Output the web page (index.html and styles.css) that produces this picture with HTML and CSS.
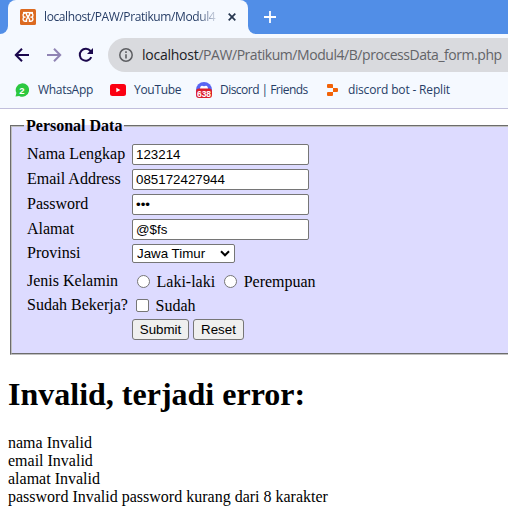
FILE: index.html
```html
<!DOCTYPE html>
<html lang="id">
<head>
<meta charset="utf-8">
<title>localhost/PAW/Pratikum/Modul4</title>
<link rel="stylesheet" href="styles.css">
</head>
<body>
<header class="browser">
  <div class="tabstrip">
    <div class="edge"><i class="curve-left"></i></div>
    <div class="tab">
      <svg class="favicon" width="16" height="16" viewBox="0 0 16 16"><rect width="16" height="16" rx="1.500" fill="#dc6a20"/><path d="M3 3.500H13" stroke="#fff" stroke-width="1.200"/><path d="M6.500 10.500V12.200H5A2.100 2.100 0 0 1 4.500 8.100A2.100 2.100 0 0 1 5 4H6.500V5.700L8 8L9.500 5.700V4H11A2.100 2.100 0 0 1 11.500 8.100A2.100 2.100 0 0 1 11 12.200H9.500V10.500L8 8Z" fill="none" stroke="#fff" stroke-width="1.400"/></svg>
      <span class="tab-title">localhost/PAW/Pratikum/Modul4</span>
      <svg class="close" width="8" height="8" viewBox="0 0 8 8"><path d="M.7.7l6.600 6.600M7.300.7L.7 7.300" stroke="#26364f" stroke-width="1.700"/></svg>
    </div>
    <div class="strip-rest"><i class="curve-right"></i><svg width="12" height="12" viewBox="0 0 12 12"><path d="M6 0v12M0 6h12" stroke="#fff" stroke-width="1.800"/></svg></div>
  </div>
  <div class="toolbar">
    <svg class="nav" width="16" height="16" viewBox="0 0 16 16"><path d="M15 8H2M8 1.800L1.800 8L8 14.200" fill="none" stroke="#1b084d" stroke-width="2"/></svg>
    <svg class="nav" width="16" height="16" viewBox="0 0 16 16"><path d="M1 8h13M8 1.800L14.200 8L8 14.200" fill="none" stroke="#9084b4" stroke-width="2"/></svg>
    <svg class="nav" width="16" height="16" viewBox="0 0 16 16"><path d="M13.300 10.200A6 6 0 1 1 12.500 4L14 5.500" fill="none" stroke="#1b084d" stroke-width="2"/><path d="M15 1v6H9z" fill="#1b084d"/></svg>
    <div class="address">
      <svg width="14" height="14" viewBox="0 0 14 14"><circle cx="7" cy="7" r="6.200" fill="none" stroke="#5d5e62" stroke-width="1.500"/><path d="M7 6.200v4.300M7 3.300v1.600" stroke="#5d5e62" stroke-width="1.600"/></svg>
      <span class="url"><b>localhost</b>/PAW/Pratikum/Modul4/B/processData_form.php</span>
    </div>
  </div>
  <nav class="bookmarks">
    <a class="bm whatsapp"><svg width="14" height="14" viewBox="0 0 14 14"><path d="M.5 13.500L1.400 10A6.700 6.700 0 1 1 4.200 12.900z" fill="#2cc840"/><text x="7" y="10.600" text-anchor="middle" class="badge-two">2</text></svg><span>WhatsApp</span></a>
    <a class="bm youtube"><svg width="16" height="12" viewBox="0 0 16 12"><rect width="16" height="12" rx="2.500" fill="#fb0012"/><path d="M6.300 3.700L10.400 6L6.300 8.300z" fill="#fff"/></svg><span>YouTube</span></a>
    <a class="bm discord"><svg width="16" height="16" viewBox="0 0 16 16"><circle cx="8" cy="8" r="8" fill="#5865f2"/><path d="M4 7Q4 4 6 3.800L8 4.300L10 3.800Q12 4 12 7z" fill="#fff"/><rect y="6.500" width="16" height="9.500" rx="3" fill="#dc1f2c"/><text x="8" y="14.500" text-anchor="middle" class="badge-num">638</text></svg><span>Discord | Friends</span></a>
    <a class="bm replit"><svg width="11" height="12" viewBox="0 0 11 12"><path d="M1 0h4q1 0 1 1v3H1Q0 4 0 3V1Q0 0 1 0M6 4h4q1 0 1 1v2q0 1-1 1H6zM1 8h5v3q0 1-1 1H1q-1 0-1-1V9q0-1 1-1" fill="#f26207"/></svg><span>discord bot - Replit</span></a>
  </nav>
</header>
<main>
  <form onsubmit="return false">
    <fieldset>
      <legend>Personal Data</legend>
      <div class="fields">
        <label for="nama">Nama Lengkap</label><input class="text" id="nama" value="123214">
        <label for="email">Email Address</label><input class="text" id="email" value="085172427944">
        <label for="pass">Password</label><input class="text" id="pass" type="password" value="abc">
        <label for="alamat">Alamat</label><input class="text" id="alamat" value="@$fs">
        <label for="prov">Provinsi</label>
        <div class="select-wrap"><select id="prov"><option>Jawa Timur</option></select><svg class="chevron" width="10" height="7" viewBox="0 0 10 7"><path d="M1 1.300L5 5.300L9 1.300" fill="none" stroke="#000" stroke-width="2"/></svg></div>
        <span>Jenis Kelamin</span>
        <div class="choices"><input class="radio" type="radio" name="jk" id="l"><label for="l">Laki-laki</label><input class="radio" type="radio" name="jk" id="p"><label for="p">Perempuan</label></div>
        <span>Sudah Bekerja?</span>
        <div class="choices"><input class="check" type="checkbox" id="kerja"><label for="kerja">Sudah</label></div>
        <span></span>
        <div class="buttons"><button class="submit">Submit</button><button class="reset" type="reset">Reset</button></div>
      </div>
    </fieldset>
  </form>
  <h1>Invalid, terjadi error:</h1>
  <p>nama Invalid<br>email Invalid<br>alamat Invalid<br>password Invalid password kurang dari 8 karakter</p>
</main>
</body>
</html>
```
FILE: styles.css
```css
* { box-sizing: border-box; }
html, body { margin: 0; height: 520px; overflow: hidden; background: #fff; }
body { font: 16px/18px "Liberation Serif", "Times New Roman", serif; color: #000; }
svg { display: block; flex: none; }

.browser { height: 109px; background: #f5f9ff; border-bottom: 1px solid #c1bfdc; font-family: "Open Sans", "Noto Sans", sans-serif; color: #263d66; white-space: nowrap; overflow: hidden; }
.tabstrip { display: flex; height: 34px; }
.edge { width: 8px; background: #f5f9ff; }
.curve-left { display: block; height: 34px; background: #518ee7; border-bottom-right-radius: 8px; }
.tab { width: 240px; display: flex; align-items: center; padding-left: 12px; background: #518ee7; position: relative; isolation: isolate; }
.tab::before { content: ""; position: absolute; inset: 0; z-index: -1; background: #f5f9ff; border-radius: 8px 8px 0 0; }
.tab-title { width: 176px; margin-left: 8px; font-size: 12px; letter-spacing: -.4px; -webkit-mask-image: linear-gradient(90deg, #000 153px, transparent 176px); mask-image: linear-gradient(90deg, #000 153px, transparent 176px); }
.close { margin-left: 8px; }
.strip-rest { flex: 1; display: flex; align-items: center; padding-left: 16px; background: #f5f9ff; position: relative; isolation: isolate; }
.curve-right { position: absolute; inset: 0; z-index: -1; background: #518ee7; border-bottom-left-radius: 8px; }

.toolbar { display: flex; align-items: center; height: 34px; margin-top: 4px; padding-left: 14px; }
.nav { margin-right: 16px; }
.nav:nth-child(3) { margin-right: 14px; }
.address { display: flex; align-items: center; flex: 1; height: 34px; padding-left: 11px; background: #d9dade; border-radius: 17px 0 0 17px; }
.url { margin-left: 9px; font-size: 14px; letter-spacing: -.45px; color: #636468; }
.url b { font-weight: 400; color: #202124; letter-spacing: -.25px; }

.bookmarks { display: flex; align-items: center; height: 36px; font-size: 12px; letter-spacing: -.3px; }
.bm { display: flex; align-items: center; flex: none; }
.whatsapp { width: 95px; padding-left: 15px; }
.whatsapp span { margin-left: 9px; }
.youtube { width: 86px; margin-left: 15px; }
.youtube span { margin-left: 8px; }
.discord { width: 131px; letter-spacing: -.53px; }
.discord span { margin-left: 8px; }
.replit { letter-spacing: -.16px; }
.replit span { margin-left: 10px; }
.badge-two { font: bold 9.500px "Liberation Sans", sans-serif; letter-spacing: 0; fill: #fff; }
.badge-num { font: bold 8.500px "Liberation Sans", sans-serif; letter-spacing: 0; fill: #fff; }

main { padding: 8px 0 0 8px; }
fieldset { height: 238px; margin: 0 -10px 0 2px; padding: 0 0 0 14px; border: 2px groove #c0c0c0; background: #dddbff; }
legend { margin-left: -2px; padding: 0 2px; font-weight: bold; }
.fields { display: grid; grid-template-columns: 105px 1fr; grid-template-rows: 25px 25px 25px 25px 23px 32px 16px 33px; align-items: center; padding: 7px 0 0 1px; }
.fields > label, .fields > span { margin-top: -1px; }
.text { width: 177px; height: 21px; margin: 0; padding: 1px 3px; border: 1px solid #767676; border-radius: 2px; background: #fff; color: #000; font: 13.333px "Liberation Sans", Arial, sans-serif; }
.select-wrap { position: relative; width: 103px; }
select { display: block; width: 103px; height: 19px; margin: 0; padding: 0 0 0 4px; appearance: none; border: 1px solid #767676; border-radius: 2px; background: #fff; color: #000; font: 13.333px "Liberation Sans", Arial, sans-serif; }
.chevron { position: absolute; right: 5px; top: 6px; }
.choices { display: flex; align-items: center; }
.choices label { margin: 1px 9px 0 6.500px; }
.radio, .check { flex: none; appearance: none; width: 13px; height: 13px; margin: 0; border: 1px solid #767676; background: #fff; }
.radio { border-radius: 50%; }
.radio:first-child { margin-left: 5px; }
.check { margin-left: 4px; border-radius: 2px; }
.buttons { display: flex; gap: 4px; }
button { height: 21px; padding: 0; border: 1px solid #767676; border-radius: 3px; background: #efefef; color: #000; font: 13.333px "Liberation Sans", Arial, sans-serif; }
.submit { width: 57px; }
.reset { width: 51px; }
h1 { margin: 21px 0; font-size: 32px; line-height: 37px; }
p { margin: 0; }
```
